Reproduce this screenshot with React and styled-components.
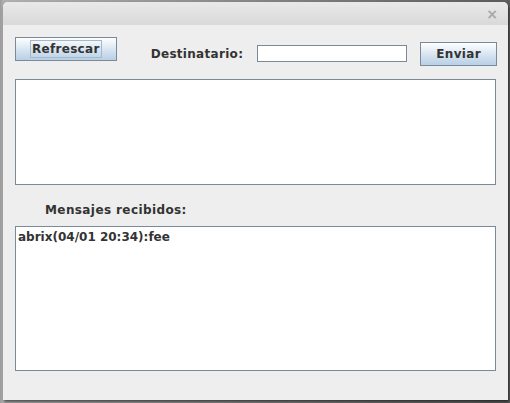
import React from "react";
import styled, { createGlobalStyle } from "styled-components";

const Global = createGlobalStyle`
  html, body {
    margin: 0;
    padding: 0;
    background: #8d8d8d;
    width: 510px;
    height: 403px;
    overflow: hidden;
  }
  * { box-sizing: border-box; }
`;

const Desktop = styled.div`
  width: 510px;
  height: 403px;
  padding: 2px 2px 0 3px;
  background: linear-gradient(to right, #9a9a9a 0, #b0b0b0 3px, #5c5c5c 508px);
`;

const Window = styled.div`
  width: 505px;
  height: 398px;
  background: #eeeeee;
  border-radius: 5px 5px 0 0;
  box-shadow: 1px 2px 3px rgba(0, 0, 0, 0.55);
  display: flex;
  flex-direction: column;
  font-family: "DejaVu Sans", sans-serif;
  font-weight: bold;
  font-size: 12px;
  color: #333333;
`;

const TitleBar = styled.div`
  height: 23px;
  border-radius: 5px 5px 0 0;
  background: linear-gradient(#e9e9e9, #d9d9d9);
  display: flex;
  justify-content: flex-end;
  align-items: center;
  padding-right: 10px;
`;

const Close = styled.span`
  color: #a8a8a8;
  font-size: 14px;
  font-weight: bold;
  line-height: 1;
`;

const Content = styled.div`
  display: flex;
  flex-direction: column;
  padding: 12px 11px 0 12px;
`;

const Toolbar = styled.div`
  display: flex;
  align-items: flex-start;
  height: 42px;
  letter-spacing: 0.3px;
`;

const Button = styled.button`
  margin-top: ${({ $top }) => $top}px;
  margin-left: ${({ $left }) => $left || 0}px;
  width: ${({ $w }) => $w}px;
  height: 24px;
  border: 1px solid #7a8a99;
  border-radius: 0;
  background: linear-gradient(#ffffff 0%, #dde8f3 45%, #b8cfe5 100%);
  font-family: "DejaVu Sans", sans-serif;
  font-weight: bold;
  font-size: 12px;
  letter-spacing: 0.3px;
  color: #333333;
  padding: 2px;
  display: flex;
  align-items: center;
  justify-content: center;
`;

const Focus = styled.span`
  border: 1px solid ${({ $on }) => ($on ? "#a3b8cc" : "transparent")};
  padding: 0 1px;
  line-height: 16px;
`;

const Label = styled.span`
  margin-top: ${({ $top }) => $top}px;
  margin-left: ${({ $left }) => $left}px;
  line-height: 15px;
`;

const Field = styled.input`
  margin-top: 8px;
  margin-left: 14px;
  width: 150px;
  height: 17px;
  border: 1px solid #7a8a99;
  background: #ffffff;
  outline: none;
`;

const TextArea = styled.div`
  height: ${({ $h }) => $h}px;
  width: 481px;
  background: #ffffff;
  border: 1px solid #7a8a99;
  padding: 3px 2px;
  line-height: 15px;
  color: #333333;
`;

const Heading = styled.div`
  padding: 18px 0 8px 30px;
  line-height: 15px;
  letter-spacing: 0.4px;
`;

export default function App() {
  return (
    <>
      <Global />
      <Desktop>
        <Window>
          <TitleBar>
            <Close>×</Close>
          </TitleBar>
          <Content>
            <Toolbar>
              <Button $top={0} $w={102}>
                <Focus $on>Refrescar</Focus>
              </Button>
              <Label $top={10} $left={34}>Destinatario:</Label>
              <Field />
              <Button $top={5} $left={13} $w={77}>
                <Focus>Enviar</Focus>
              </Button>
            </Toolbar>
            <TextArea $h={106} />
            <Heading>Mensajes recibidos:</Heading>
            <TextArea $h={145}>abrix(04/01 20:34):fee</TextArea>
          </Content>
        </Window>
      </Desktop>
    </>
  );
}
